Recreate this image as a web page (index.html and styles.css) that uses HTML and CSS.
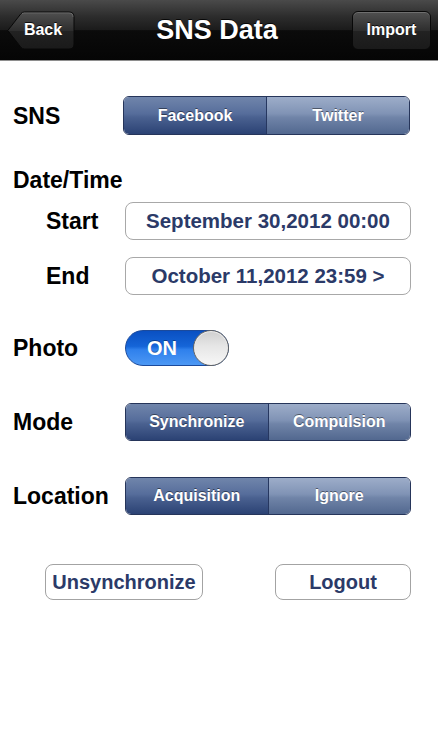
FILE: index.html
```html
<!DOCTYPE html>
<html lang="en">
<head>
<meta charset="utf-8">
<title>SNS Data</title>
<link rel="stylesheet" href="styles.css">
</head>
<body>
<div class="screen">
  <header class="navbar">
    <div class="nav-left">
      <button class="nav-btn back-btn">
        <svg class="back-shape" width="68" height="39" viewBox="0 0 68 39" aria-hidden="true">
          <defs>
            <linearGradient id="bg" x1="0" y1="0" x2="0" y2="1">
              <stop offset="0" stop-color="#505050"/>
              <stop offset="0.5" stop-color="#2e2e2e"/>
              <stop offset="0.52" stop-color="#222"/>
              <stop offset="1" stop-color="#1a1a1a"/>
            </linearGradient>
          </defs>
          <path d="M0.8 19.5 L14 2.6 Q15.3 1 17.5 1 L62 1 Q67 1 67 6 L67 33 Q67 38 62 38 L17.5 38 Q15.3 38 14 36.4 Z" fill="url(#bg)" stroke="#080808" stroke-width="1"/>
          <path d="M15 2.6 Q16 1.9 17.5 1.9 L62 1.9 Q66 1.9 66.1 6" fill="none" stroke="rgba(255,255,255,0.18)" stroke-width="1"/>
        </svg>
        <span class="btn-text">Back</span>
      </button>
    </div>
    <h1 class="title">SNS Data</h1>
    <div class="nav-right">
      <button class="nav-btn import-btn">Import</button>
    </div>
  </header>

  <main class="content">
    <div class="row sns-row">
      <span class="label">SNS</span>
      <div class="segmented sns-seg">
        <span class="seg on">Facebook</span>
        <span class="seg">Twitter</span>
      </div>
    </div>

    <div class="section-label">Date/Time</div>

    <div class="row start-row">
      <span class="label sub-label">Start</span>
      <div class="field">September 30,2012 00:00</div>
    </div>

    <div class="row end-row">
      <span class="label sub-label">End</span>
      <div class="field">October 11,2012 23:59 &gt;</div>
    </div>

    <div class="row photo-row">
      <span class="label">Photo</span>
      <div class="switch-wrap">
        <div class="switch">
          <span class="switch-text">ON</span>
          <span class="knob"></span>
        </div>
      </div>
    </div>

    <div class="row mode-row">
      <span class="label">Mode</span>
      <div class="segmented">
        <span class="seg on">Synchronize</span>
        <span class="seg">Compulsion</span>
      </div>
    </div>

    <div class="row location-row">
      <span class="label">Location</span>
      <div class="segmented">
        <span class="seg on">Acquisition</span>
        <span class="seg">Ignore</span>
      </div>
    </div>

    <div class="actions">
      <button class="action-btn unsync-btn">Unsynchronize</button>
      <button class="action-btn logout-btn">Logout</button>
    </div>
  </main>
</div>
</body>
</html>
```

FILE: styles.css
```css
* {
  box-sizing: border-box;
}

html, body {
  margin: 0;
  padding: 0;
  background: #ffffff;
}

body {
  font-family: "Liberation Sans", Arial, Helvetica, sans-serif;
  color: #000;
}

.screen {
  width: 438px;
  height: 750px;
  background: #ffffff;
  overflow: hidden;
}

/* ---------- Navigation bar ---------- */
.navbar {
  height: 61px;
  display: grid;
  grid-template-columns: 1fr auto 1fr;
  align-items: center;
  padding: 0 7px;
  background: linear-gradient(to bottom, #4a4a4a 0%, #2c2c2c 28%, #1b1b1b 50%, #0b0b0b 51%, #050505 100%);
  border-bottom: 1px solid #8e8e8e;
}

.nav-left {
  display: flex;
  justify-content: flex-start;
}

.nav-right {
  display: flex;
  justify-content: flex-end;
}

.title {
  margin: 0;
  color: #ffffff;
  font-size: 27px;
  font-weight: bold;
  text-shadow: 0 -1px 0 rgba(0, 0, 0, 0.8);
  padding-right: 4px;
}

.nav-btn {
  font-family: "Liberation Sans", Arial, Helvetica, sans-serif;
  font-size: 16px;
  font-weight: bold;
  color: #ffffff;
  text-shadow: 0 -1px 0 rgba(0, 0, 0, 0.8);
  cursor: pointer;
  padding: 0;
  margin: 0;
}

.back-btn {
  position: relative;
  width: 68px;
  height: 39px;
  background: transparent;
  border: none;
  display: flex;
  align-items: center;
  justify-content: center;
  padding-left: 4px;
}

.back-shape {
  position: absolute;
  left: 0;
  top: 0;
}

.btn-text {
  position: relative;
}

.import-btn {
  width: 79px;
  height: 39px;
  border: 1px solid #080808;
  border-radius: 6px;
  background: linear-gradient(to bottom, #505050 0%, #2e2e2e 50%, #222 52%, #1a1a1a 100%);
  box-shadow: inset 0 1px 0 rgba(255, 255, 255, 0.18);
}

/* ---------- Content ---------- */
.content {
  padding: 35px 27px 0 13px;
}

.row {
  display: grid;
  grid-template-columns: 112px 1fr;
  align-items: center;
}

.label {
  font-size: 23px;
  font-weight: bold;
  line-height: 26px;
}

.sub-label {
  padding-left: 33px;
}

.section-label {
  margin-top: 32px;
  font-size: 23px;
  font-weight: bold;
  line-height: 26px;
}

.sns-row {
  height: 39px;
  grid-template-columns: 110px 1fr;
  padding-right: 1px;
}

.start-row {
  height: 38px;
  margin-top: 9px;
}

.end-row {
  height: 38px;
  margin-top: 17px;
}

.photo-row {
  height: 36px;
  margin-top: 35px;
}

.mode-row {
  height: 38px;
  margin-top: 37px;
}

.location-row {
  height: 38px;
  margin-top: 36px;
}

/* ---------- Segmented control ---------- */
.segmented {
  display: flex;
  height: 100%;
  border: 1px solid #26355a;
  border-radius: 6px;
  overflow: hidden;
}

.seg {
  flex: 1;
  display: flex;
  align-items: center;
  justify-content: center;
  font-size: 16px;
  font-weight: bold;
  color: #ffffff;
  text-shadow: 0 -1px 0 rgba(0, 0, 0, 0.45);
  background: linear-gradient(to bottom, #9dadc9 0%, #8093b5 45%, #7084a8 55%, #52688f 100%);
}

.seg.on {
  background: linear-gradient(to bottom, #7085ab 0%, #566d9b 45%, #4a6190 55%, #2b4274 100%);
}

.seg + .seg {
  border-left: 1px solid #263760;
}

/* ---------- Date fields ---------- */
.field {
  height: 100%;
  display: flex;
  align-items: center;
  justify-content: center;
  border: 1px solid #a8a8a8;
  border-radius: 8px;
  background: #ffffff;
  color: #2b3a68;
  font-size: 20.5px;
  font-weight: bold;
}

/* ---------- Switch ---------- */
.switch-wrap {
  display: flex;
}

.switch {
  position: relative;
  width: 104px;
  height: 36px;
  border-radius: 18px;
  border: 1px solid #1b4a9c;
  background: linear-gradient(to bottom, #0a50c2 0%, #1565d8 45%, #2f80ec 55%, #4c98f4 100%);
  display: flex;
  align-items: center;
}

.switch-text {
  width: 72px;
  text-align: center;
  color: #ffffff;
  font-size: 20px;
  font-weight: bold;
  text-shadow: 0 -1px 0 rgba(0, 0, 0, 0.35);
}

.knob {
  position: absolute;
  right: -1px;
  top: -1px;
  width: 36px;
  height: 36px;
  border-radius: 50%;
  border: 1px solid #666;
  background: linear-gradient(to bottom, #cfcfcf 0%, #e6e6e6 45%, #f7f7f7 100%);
  box-shadow: inset 0 1px 1px rgba(255, 255, 255, 0.7);
}

/* ---------- Bottom buttons ---------- */
.actions {
  margin-top: 49px;
  padding-left: 32px;
  display: flex;
  justify-content: space-between;
}

.action-btn {
  height: 36px;
  border: 1px solid #a3a3a3;
  border-radius: 8px;
  background: #ffffff;
  color: #2b3a68;
  font-family: "Liberation Sans", Arial, Helvetica, sans-serif;
  font-size: 20px;
  font-weight: bold;
  padding: 0;
  cursor: pointer;
}

.unsync-btn {
  width: 158px;
}

.logout-btn {
  width: 136px;
}
```
